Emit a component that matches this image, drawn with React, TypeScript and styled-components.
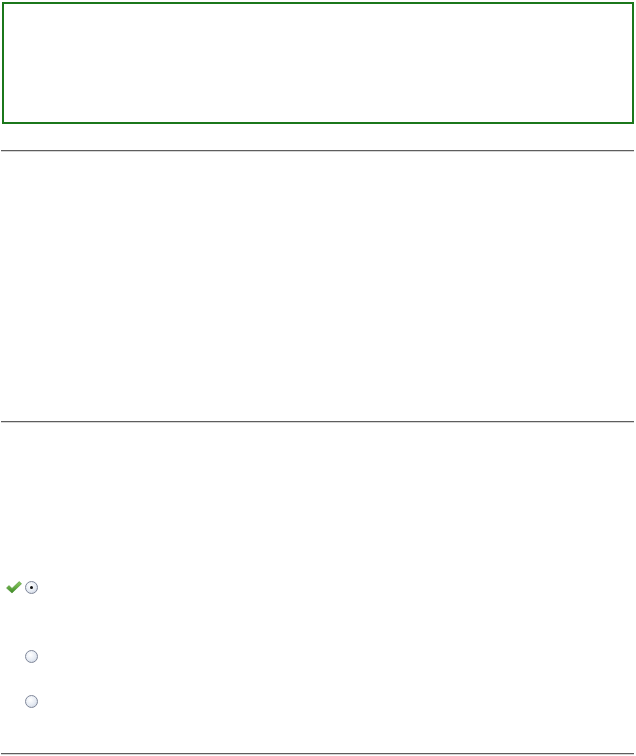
import * as React from "react";
import styled, { createGlobalStyle } from "styled-components";

const GlobalStyle = createGlobalStyle`
  body {
    margin: 0;
    background: #ffffff;
    font-family: "Liberation Sans", Arial, sans-serif;
  }
`;

const Page = styled.div`
  width: 636px;
  padding: 2px 2px 0 1px;
  box-sizing: border-box;
`;

const Banner = styled.div`
  height: 122px;
  margin-left: 1px;
  border: 2px solid #1b771b;
  box-sizing: border-box;
`;

const Rule = styled.div<{ $top: number }>`
  margin-top: ${(p) => p.$top}px;
  height: 1px;
  background: #5e5e5e;
  border-bottom: 1px solid #d6d6d6;
`;

const Section = styled.div<{ $height: number }>`
  height: ${(p) => p.$height}px;
`;

const OptionList = styled.div`
  display: flex;
  flex-direction: column;
  padding-top: 156px;
`;

const OptionRow = styled.div<{ $gap: number }>`
  display: flex;
  align-items: center;
  height: 16px;
  margin-bottom: ${(p) => p.$gap}px;
`;

const IconSlot = styled.div`
  width: 24px;
  height: 16px;
  display: flex;
  align-items: center;
  justify-content: flex-end;
  padding-right: 3px;
  box-sizing: border-box;
`;

const Radio = styled.span<{ $checked?: boolean }>`
  position: relative;
  width: 13px;
  height: 13px;
  border-radius: 50%;
  box-sizing: border-box;
  border: 1px solid #7f8799;
  background: radial-gradient(circle at 40% 35%, #ffffff 0%, #e6ebf3 55%, #c3cbdb 100%);
  &::after {
    content: "";
    display: ${(p) => (p.$checked ? "block" : "none")};
    position: absolute;
    left: 4px;
    top: 4px;
    width: 3px;
    height: 3px;
    border-radius: 50%;
    background: #111;
  }
`;

const Check = () => (
  <svg width="16" height="13" viewBox="0 0 16 13">
    <defs>
      <linearGradient id="ck" x1="0" y1="0" x2="0" y2="1">
        <stop offset="0" stopColor="#8ccb5e" />
        <stop offset="1" stopColor="#3d8a26" />
      </linearGradient>
    </defs>
    <path
      d="M0.5 7 L3 4.6 L6 7.4 L13.2 0.6 L15.5 2.8 L6 12 Z"
      fill="url(#ck)"
      stroke="#4a8d34"
      strokeWidth="0.6"
      strokeLinejoin="round"
    />
  </svg>
);

const options = [
  { checked: true, correct: true, gap: 53 },
  { checked: false, correct: false, gap: 29 },
  { checked: false, correct: false, gap: 0 },
];

export default function App() {
  return (
    <Page>
      <GlobalStyle />
      <Banner />
      <Rule $top={26} />
      <Section $height={269} />
      <Rule $top={0} />
      <Section $height={330}>
        <OptionList>
          {options.map((o, i) => (
            <OptionRow key={i} $gap={o.gap}>
              <IconSlot>{o.correct && <Check />}</IconSlot>
              <Radio $checked={o.checked} />
            </OptionRow>
          ))}
        </OptionList>
      </Section>
      <Rule $top={0} />
    </Page>
  );
}
